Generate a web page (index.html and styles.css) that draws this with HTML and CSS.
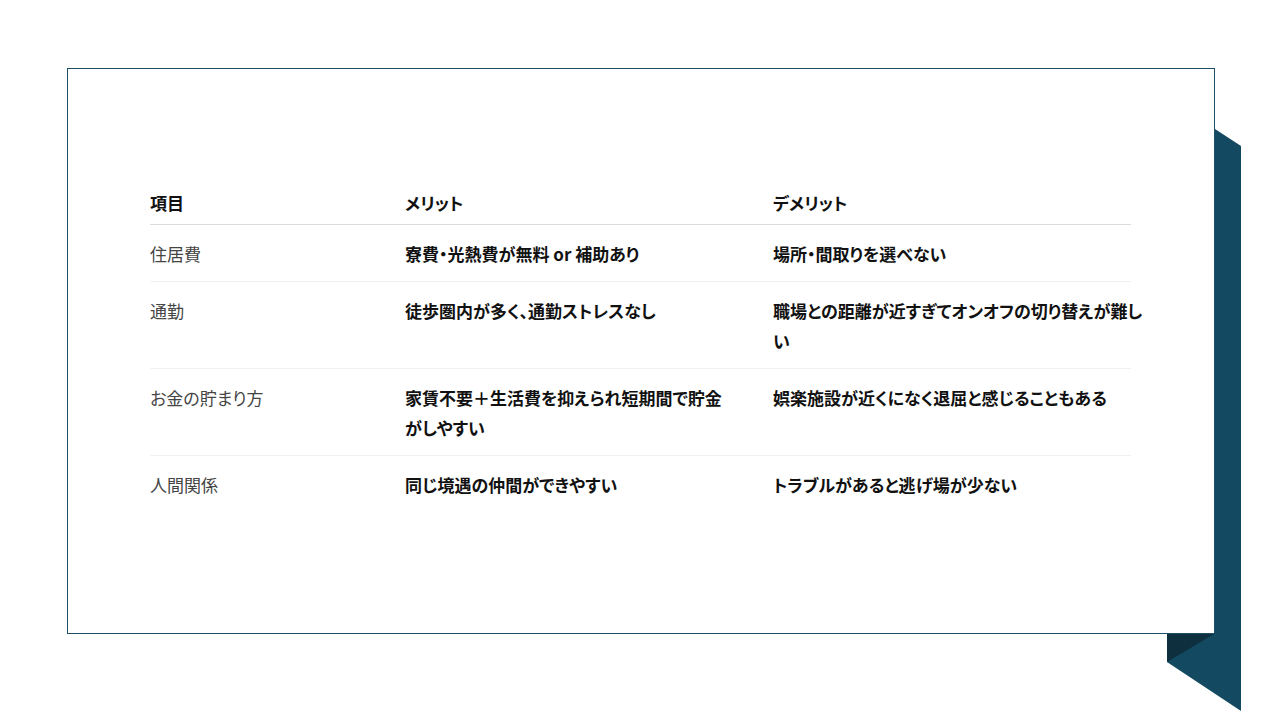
FILE: index.html
```html
<!DOCTYPE html>
<html lang="ja">
<head>
<meta charset="utf-8">
<title>寮生活のメリット・デメリット</title>
<link rel="stylesheet" href="styles.css">
</head>
<body>
<div class="stage">
  <svg class="ribbon" width="1280" height="720" viewBox="0 0 1280 720" aria-hidden="true">
    <polygon points="1215,129 1241,146 1241,711 1167,662 1167,634 1215,634" fill="#134a62"/>
    <polygon points="1167,634 1214,634 1167,662" fill="#0d2f3e"/>
  </svg>
  <section class="card">
    <div class="table">
      <div class="row head">
        <div class="cell">項目</div>
        <div class="cell">メリット</div>
        <div class="cell">デメリット</div>
      </div>
      <div class="row">
        <div class="cell label">住居費</div>
        <div class="cell">寮費・光熱費が無料 or 補助あり</div>
        <div class="cell">場所・間取りを選べない</div>
      </div>
      <div class="row">
        <div class="cell label">通勤</div>
        <div class="cell">徒歩圏内が多く、通勤ストレスなし</div>
        <div class="cell">職場との距離が近すぎてオンオフの切り替えが難しい</div>
      </div>
      <div class="row">
        <div class="cell label">お金の貯まり方</div>
        <div class="cell">家賃不要＋生活費を抑えられ短期間で貯金がしやすい</div>
        <div class="cell">娯楽施設が近くになく退屈と感じることもある</div>
      </div>
      <div class="row last">
        <div class="cell label">人間関係</div>
        <div class="cell">同じ境遇の仲間ができやすい</div>
        <div class="cell">トラブルがあると逃げ場が少ない</div>
      </div>
    </div>
  </section>
</div>
</body>
</html>
```
FILE: styles.css
```css
html, body {
  margin: 0;
  padding: 0;
  background: #ffffff;
}

body {
  font-family: "Noto Sans CJK JP", "Noto Sans", sans-serif;
  color: #111;
}

.stage {
  position: relative;
  width: 1280px;
  height: 720px;
  overflow: hidden;
  padding: 68px 0 0 67px;
  box-sizing: border-box;
}

.ribbon {
  position: absolute;
  left: 0;
  top: 0;
}

.card {
  position: relative;
  width: 1148px;
  height: 566px;
  box-sizing: border-box;
  border: 1px solid #1d4f68;
  background: #ffffff;
  padding: 119px 83px 0 82px;
}

.table {
  display: flex;
  flex-direction: column;
}

.row {
  display: grid;
  grid-template-columns: 255px 368px minmax(0, 1fr);
  border-bottom: 1px solid #f0f0f0;
  padding: 14px 0 12px;
}

.row > .cell:nth-child(1) {
  padding-right: 24px;
}

.row > .cell:nth-child(2) {
  padding-right: 43px;
}

.row > .cell:nth-child(3) {
  margin-right: -14px;
}

.row.last {
  border-bottom: none;
}

.row.head {
  padding: 0 0 6px;
  border-bottom: 1px solid #dcdcdc;
}

.cell {
  font-size: 17px;
  line-height: 30px;
  font-weight: 700;
  color: #111;
  font-feature-settings: "palt";
}

.cell.label {
  font-weight: 400;
  color: #444;
}
```
